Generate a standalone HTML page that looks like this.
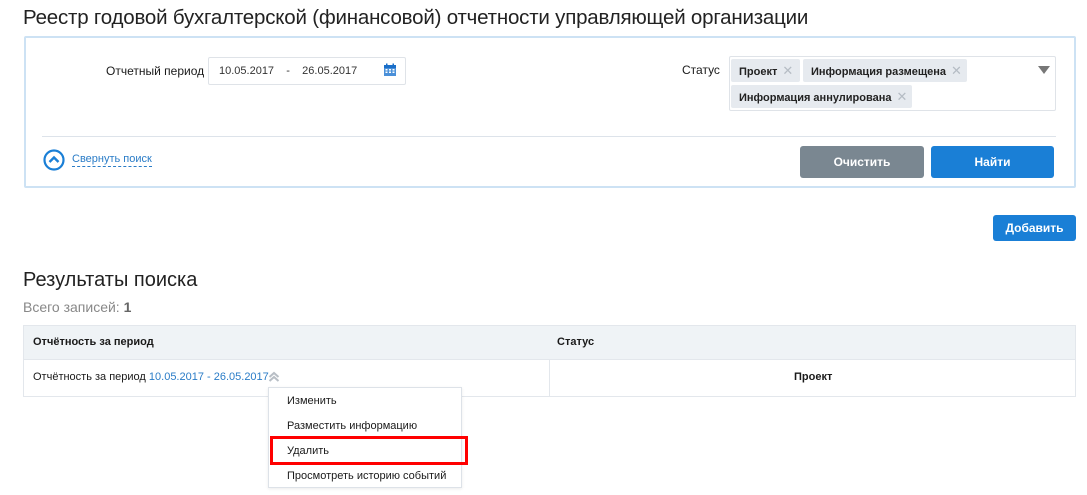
<!DOCTYPE html>
<html><head><meta charset="utf-8"><style>
*{margin:0;padding:0;box-sizing:border-box}
body{width:1087px;height:495px;background:#fff;font-family:"Liberation Sans","Noto Sans CJK JP",sans-serif;color:#1a1a1a;position:relative;overflow:hidden;font-size:11px}
.a{position:absolute;white-space:nowrap}
.tag{position:absolute;background:#e6eaef;border-radius:2px;height:23px;line-height:23px;padding-left:8px;font-weight:bold;font-size:11px;color:#222}
.tag span{color:#b5bcc4;font-weight:normal;font-size:13px;margin-left:5px}
.btn{position:absolute;color:#fff;font-weight:bold;font-size:12px;text-align:center;border-radius:3px}
</style></head><body>
<div class="a" style="left:23px;top:6px;font-size:20.5px;color:#222;letter-spacing:-0.2px">Реестр годовой бухгалтерской (финансовой) отчетности управляющей организации</div>
<div class="a" style="left:24px;top:36px;width:1052px;height:152px;border:2px solid #cde2f4;border-radius:2px"></div>
<div class="a" style="left:106px;top:64px;font-size:12px">Отчетный период</div>
<div class="a" style="left:208px;top:57px;width:198px;height:28px;border:1px solid #dfe3e8;border-radius:2px"></div>
<div class="a" style="left:219px;top:65px;font-size:11px;color:#333">10.05.2017 &nbsp;&nbsp; - &nbsp;&nbsp; 26.05.2017</div>
<svg class="a" style="left:383px;top:63px" width="14" height="14" viewBox="0 0 14 14"><rect x="1" y="2" width="12" height="11" fill="#4a90d9"/><rect x="1" y="2" width="12" height="3" fill="#1a6fc9"/><g fill="#fff"><rect x="2.5" y="6" width="2" height="1.5"/><rect x="6" y="6" width="2" height="1.5"/><rect x="9.5" y="6" width="2" height="1.5"/><rect x="2.5" y="8.5" width="2" height="1.5"/><rect x="6" y="8.5" width="2" height="1.5"/><rect x="9.5" y="8.5" width="2" height="1.5"/></g><rect x="3" y="0.5" width="1.5" height="3" fill="#1a6fc9"/><rect x="9.5" y="0.5" width="1.5" height="3" fill="#1a6fc9"/></svg>
<div class="a" style="left:682px;top:63px;font-size:12px">Статус</div>
<div class="a" style="left:729px;top:56px;width:327px;height:55px;border:1px solid #dfe3e8;border-radius:2px"></div>
<div class="tag" style="left:731px;top:59px;width:69px">Проект<span>✕</span></div>
<div class="tag" style="left:803px;top:59px;width:164px">Информация размещена<span>✕</span></div>
<div class="tag" style="left:731px;top:85px;width:181px">Информация аннулирована<span>✕</span></div>
<div class="a" style="left:1038px;top:66px;width:0;height:0;border-left:6px solid transparent;border-right:6px solid transparent;border-top:8px solid #777"></div>
<div class="a" style="left:42px;top:136px;width:1014px;height:1px;background:#dde3ea"></div>
<svg class="a" style="left:43px;top:149px" width="22" height="22" viewBox="0 0 22 22"><circle cx="11" cy="11" r="9.5" fill="none" stroke="#1a7fd6" stroke-width="2.2"/><path d="M6.5 13 L11 8.5 L15.5 13" fill="none" stroke="#1a7fd6" stroke-width="2.4"/></svg>
<div class="a" style="left:72px;top:153px;font-size:11px;color:#2a7cc7;border-bottom:1px dashed #2a7cc7;padding-bottom:1px">Свернуть поиск</div>
<div class="btn" style="left:800px;top:146px;width:124px;height:32px;line-height:32px;background:#7a8791">Очистить</div>
<div class="btn" style="left:931px;top:146px;width:123px;height:32px;line-height:32px;background:#1a7fd6">Найти</div>
<div class="btn" style="left:993px;top:215px;width:83px;height:26px;line-height:26px;background:#1a7fd6">Добавить</div>
<div class="a" style="left:23px;top:269px;font-size:20px;color:#222">Результаты поиска</div>
<div class="a" style="left:23px;top:299px;font-size:14px;color:#888">Всего записей: <b style="color:#666">1</b></div>
<div class="a" style="left:23px;top:325px;width:1053px;height:72px;border:1px solid #e3e7ec"></div>
<div class="a" style="left:24px;top:326px;width:1051px;height:34px;background:#eff3f6;border-bottom:1px solid #e3e7ec"></div>
<div class="a" style="left:549px;top:360px;width:1px;height:36px;background:#e3e7ec"></div>
<div class="a" style="left:33px;top:336px;font-weight:bold">Отчётность за период</div>
<div class="a" style="left:557px;top:336px;font-weight:bold">Статус</div>
<div class="a" style="left:33px;top:371px">Отчётность за период <span style="color:#2a7cc7">10.05.2017 - 26.05.2017</span></div>
<svg class="a" style="left:268px;top:371px" width="12" height="12" viewBox="0 0 12 12"><path d="M1.5 6 L6 2 L10.5 6 M1.5 10 L6 6 L10.5 10" fill="none" stroke="#b8bec5" stroke-width="2"/></svg>
<div class="a" style="left:794px;top:371px;font-weight:bold">Проект</div>
<div class="a" style="left:268px;top:387px;width:194px;height:101px;border:1px solid #dde2e8;background:#fff;box-shadow:0 1px 3px rgba(0,0,0,.08)"></div>
<div class="a" style="left:287px;top:395px">Изменить</div>
<div class="a" style="left:287px;top:420px">Разместить информацию</div>
<div class="a" style="left:287px;top:445px">Удалить</div>
<div class="a" style="left:287px;top:470px">Просмотреть историю событий</div>
<div class="a" style="left:270px;top:436px;width:198px;height:29px;border:3px solid #f00"></div>
</body></html>
